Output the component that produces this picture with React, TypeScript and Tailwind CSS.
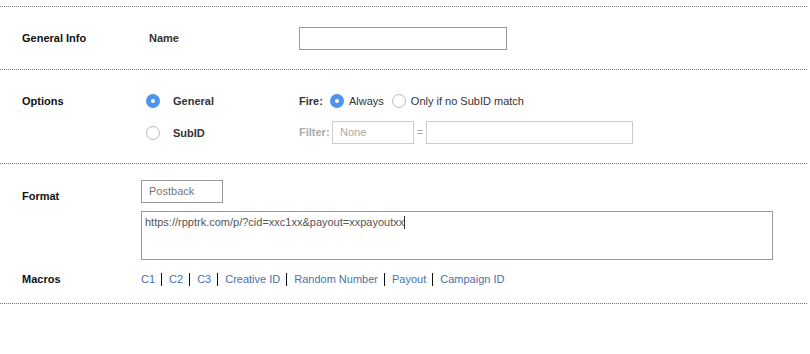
const macros = ['C1', 'C2', 'C3', 'Creative ID', 'Random Number', 'Payout', 'Campaign ID'];

function Radio({ checked }: { checked?: boolean }) {
  if (checked) {
    return (
      <span className="w-[14px] h-[14px] rounded-full bg-[#4f94ec] flex items-center justify-center shrink-0">
        <span className="w-[4px] h-[4px] rounded-full bg-white" />
      </span>
    );
  }
  return <span className="block w-[14px] h-[14px] rounded-full border border-[#bdbdbd] bg-white shrink-0" />;
}

export default function App() {
  return (
    <div className="w-[807px] bg-white font-['Liberation_Sans',Arial,sans-serif] text-[11px] leading-[13px] text-[#111]">
      <div className="h-[6px]" />

      <section className="h-[63px] border-t border-dotted border-[#7a7a7a] flex items-center pl-[22px]">
        <div className="w-[127px] font-bold">General Info</div>
        <div className="w-[150px] font-bold text-[#333]">Name</div>
        <div className="w-[208px] h-[23px] border border-[#999] bg-white" />
      </section>

      <section className="h-[94px] border-t border-dotted border-[#7a7a7a] pl-[22px] pt-[20px]">
        <div className="flex items-center h-[22px]">
          <div className="w-[124px] font-bold">Options</div>
          <div className="w-[153px] flex items-center gap-[13px]">
            <Radio checked />
            <span className="font-bold text-[#333]">General</span>
          </div>
          <span className="font-bold text-[#333] w-[31px]">Fire:</span>
          <Radio checked />
          <span className="ml-[5px] text-[#333]">Always</span>
          <span className="ml-[8px] flex">
            <Radio />
          </span>
          <span className="ml-[5px] text-[#333]">Only if no SubID match</span>
        </div>
        <div className="flex items-center h-[22px] mt-[9px]">
          <div className="w-[124px]" />
          <div className="w-[153px] flex items-center gap-[13px] pt-[2px]">
            <Radio />
            <span className="font-bold text-[#333]">SubID</span>
          </div>
          <span className="font-bold text-[#aaa] w-[33px]">Filter:</span>
          <div className="w-[82px] h-[23px] border border-[#ccc] flex items-center pl-[7px] text-[#aaa]">None</div>
          <span className="w-[12px] text-center text-[#aaa]">=</span>
          <div className="w-[207px] h-[23px] border border-[#ccc]" />
        </div>
      </section>

      <section className="h-[140px] border-t border-dotted border-[#7a7a7a] pl-[22px] pt-[16px]">
        <div className="flex">
          <div className="w-[119px] font-bold mt-[10px]">Format</div>
          <div className="flex flex-col">
            <div className="w-[82px] h-[23px] border border-[#999] flex items-center pl-[7px] text-[#777]">Postback</div>
            <div className="mt-[8px] w-[632px] h-[49px] border border-[#999] px-[3px] pt-[4px] text-[#555] flex items-start">
              <span>https://rpptrk.com/p/?cid=xxc1xx&amp;payout=xxpayoutxx</span>
              <span className="w-px h-[13px] bg-[#333]" />
            </div>
          </div>
        </div>
        <div className="flex items-center mt-[13px]">
          <div className="w-[119px] font-bold">Macros</div>
          <div className="flex items-center text-[#4a72a8]">
            {macros.map((m, i) => (
              <span
                key={m}
                className={
                  i < macros.length - 1
                    ? 'pr-[6px] mr-[7px] border-r border-[#111] leading-[13px]'
                    : 'leading-[13px]'
                }
              >
                {m}
              </span>
            ))}
          </div>
        </div>
      </section>

      <div className="border-t border-dotted border-[#7a7a7a]" />
    </div>
  );
}
